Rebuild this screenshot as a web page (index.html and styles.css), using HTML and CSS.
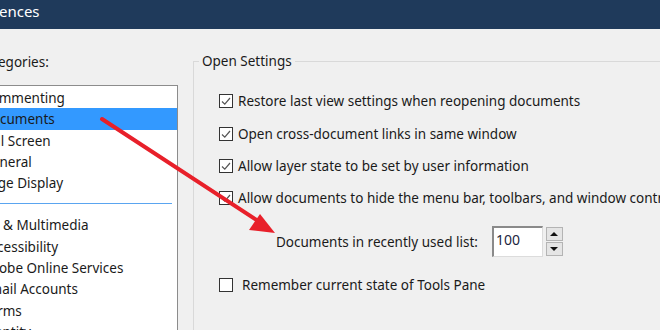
FILE: index.html
```html
<!DOCTYPE html>
<html lang="en">
<head>
<meta charset="UTF-8">
<title>Preferences</title>
<link rel="stylesheet" href="styles.css">
</head>
<body>
  <div class="window">
    <div class="titlebar">Preferences</div>
    <div class="dialog">
      <!-- left side: category list -->
      <div class="categories">
        <div class="cat-label">Categories:</div>
        <div class="list">
          <div class="item">Commenting</div>
          <div class="item selected">Documents</div>
          <div class="item">Full Screen</div>
          <div class="item">General</div>
          <div class="item">Page Display</div>
          <div class="sep"></div>
          <div class="item">3D &amp; Multimedia</div>
          <div class="item">Accessibility</div>
          <div class="item">Adobe Online Services</div>
          <div class="item">Email Accounts</div>
          <div class="item">Forms</div>
          <div class="item">Identity</div>
        </div>
      </div>

      <!-- right side: settings -->
      <fieldset class="group">
        <legend>Open Settings</legend>
        <div class="row first">
          <span class="check"><svg width="12" height="12" viewBox="0 0 12 12"><polyline points="2,6.5 4.8,9.2 10,3" fill="none" stroke="#555" stroke-width="1.2"/></svg></span>
          Restore last view settings when reopening documents
        </div>
        <div class="row">
          <span class="check"><svg width="12" height="12" viewBox="0 0 12 12"><polyline points="2,6.5 4.8,9.2 10,3" fill="none" stroke="#555" stroke-width="1.2"/></svg></span>
          Open cross-document links in same window
        </div>
        <div class="row">
          <span class="check"><svg width="12" height="12" viewBox="0 0 12 12"><polyline points="2,6.5 4.8,9.2 10,3" fill="none" stroke="#555" stroke-width="1.2"/></svg></span>
          Allow layer state to be set by user information
        </div>
        <div class="row">
          <span class="check"><svg width="12" height="12" viewBox="0 0 12 12"><polyline points="2,6.5 4.8,9.2 10,3" fill="none" stroke="#555" stroke-width="1.2"/></svg></span>
          Allow documents to hide the menu bar, toolbars, and window controls
        </div>
        <div class="row spin-row">
          <span class="spin-label">Documents in recently used list:</span>
          <span class="spin-input">100</span>
          <span class="spin-btns">
            <span class="spin-btn"><span class="tri-up"></span></span>
            <span class="spin-btn"><span class="tri-down"></span></span>
          </span>
        </div>
        <div class="row last">
          <span class="check empty"></span>
          <span class="wide">Remember current state of Tools Pane</span>
        </div>
      </fieldset>
    </div>
  </div>

  <!-- red annotation arrow drawn over the dialog -->
  <svg class="arrow" width="660" height="330" viewBox="0 0 660 330">
    <line x1="102" y1="119" x2="258" y2="221" stroke="#e8202a" stroke-width="4" stroke-linecap="round"/>
    <polygon points="275,233 260,214 249,230" fill="#e8202a"/>
  </svg>
</body>
</html>
```

FILE: styles.css
```css
body {
  margin: 0;
  width: 660px;
  height: 330px;
  overflow: hidden;
  position: relative;
  background: #f0f0f0;
  font-family: "Noto Sans", "Liberation Sans", sans-serif;
  font-size: 13.5px;
  color: #1a1a1a;
}

/* the screenshot is a crop, so the window starts off to the left */
.window {
  margin-left: -50px;
  width: 760px;
}

.titlebar {
  height: 29px;
  line-height: 23px;
  background: #1f3a5b;
  color: #fff;
  font-size: 15px;
  padding-left: 6px;
}

.dialog {
  display: flex;
  padding: 23px 0 0 22px;
}

.categories {
  width: 206px;
  flex-shrink: 0;
}

.cat-label {
  line-height: 20px;
  padding-left: 5px;
}

.list {
  margin-top: 13px;
  height: 260px;
  background: #fff;
  border: 1px solid #8c8c8c;
  padding-top: 1px;
}

.item {
  height: 21.3px;
  line-height: 23px;
  padding-left: 9px;
  white-space: nowrap;
}

.item.selected {
  background: #3399ff;
}

.sep {
  height: 1px;
  background: #5aa5f0;
  margin: 10px 5px 10px 0;
}

.group {
  margin: -1px 0 0 15px;
  padding: 0 0 0 5px;
  width: 600px;
  height: 300px;
  border: 1px solid #d9d9d9;
  flex-shrink: 0;
}

.group legend {
  padding: 0 3px;
  line-height: 20px;
}

.row {
  display: flex;
  align-items: center;
  height: 32.4px;
  padding-left: 20px;
  white-space: nowrap;
}

.row.first { margin-top: 14px; }

.check {
  width: 14px;
  height: 14px;
  box-sizing: border-box;
  border: 1px solid #333;
  background: #fff;
  margin-right: 5px;
  display: flex;
  align-items: center;
  justify-content: center;
}

.check.empty { margin-right: 9px; }

.spin-row {
  margin-top: 11px;
  padding-left: 77px;
}

.spin-label { margin-right: 14px; }

.spin-input {
  width: 51px;
  height: 31px;
  box-sizing: border-box;
  background: #fff;
  border-top: 2px solid #8a8a8a;
  border-left: 2px solid #8a8a8a;
  border-right: 1px solid #dcdcdc;
  border-bottom: 1px solid #dcdcdc;
  padding: 2px 0 0 2px;
  line-height: 20px;
  align-self: flex-start;
  color: #1c2540;
  font-size: 14px;
}

.spin-btns {
  display: flex;
  flex-direction: column;
  gap: 1px;
  margin-left: 3px;
}

.spin-btn {
  width: 17px;
  height: 14px;
  box-sizing: border-box;
  background: #e5e5e5;
  border: 1px solid #b4b4b4;
  display: flex;
  align-items: center;
  justify-content: center;
}

.tri-up, .tri-down {
  width: 0;
  height: 0;
  border-left: 4px solid transparent;
  border-right: 4px solid transparent;
}
.tri-up { border-bottom: 4px solid #111; }
.tri-down { border-top: 4px solid #111; }

.row.last { margin-top: 11px; }

.arrow {
  position: absolute;
  top: 0;
  left: 0;
  pointer-events: none;
}
```
